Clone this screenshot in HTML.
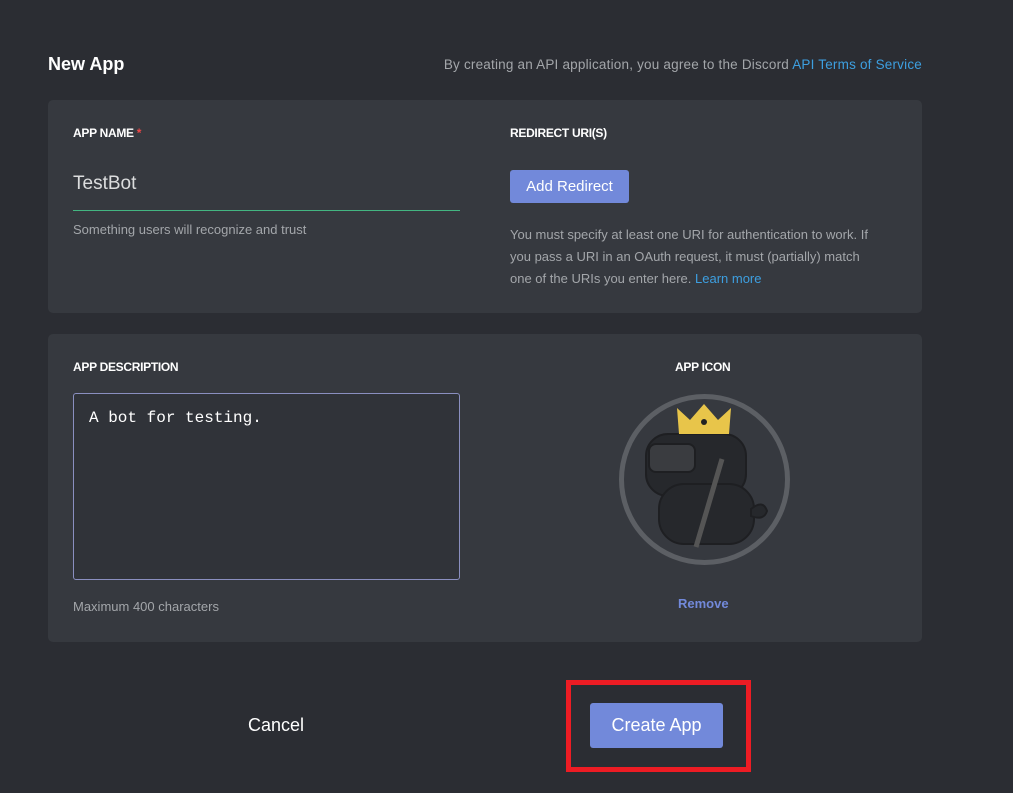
<!DOCTYPE html>
<html><head><style>
body{margin:0;width:1013px;height:793px;background:#2b2d33;font-family:"Liberation Sans",sans-serif;position:relative;overflow:hidden;color:#dcddde}
.a{position:absolute}
.panel{position:absolute;left:48px;width:874px;background:#36393f;border-radius:5px}
.lbl{font-size:12px;font-weight:bold;color:#fff;letter-spacing:-0.3px}
.sm{font-size:13px;color:#a3a6aa}
</style></head><body>
<div class="a" style="left:48px;top:54px;font-size:18px;font-weight:bold;color:#fff">New App</div>
<div class="a" style="right:91px;top:57px;font-size:13.5px;color:#a3a6aa;letter-spacing:0.2px">By creating an API application, you agree to the Discord <span style="color:#3d9fe0">API Terms of Service</span></div>

<div class="panel" style="top:100px;height:213px"></div>
<div class="a lbl" style="left:73px;top:126px">APP NAME <span style="color:#f04747">*</span></div>
<div class="a" style="left:73px;top:173px;font-size:19px;color:#dcddde">TestBot</div>
<div class="a" style="left:73px;top:210px;width:387px;height:1px;background:#43b581"></div>
<div class="a sm" style="left:73px;top:222px">Something users will recognize and trust</div>
<div class="a lbl" style="left:510px;top:126px">REDIRECT URI(S)</div>
<div class="a" style="left:510px;top:170px;width:119px;height:33px;background:#7289da;border-radius:3px;color:#fff;font-size:15px;line-height:33px;text-align:center">Add Redirect</div>
<div class="a sm" style="left:510px;top:224px;width:372px;line-height:22px">You must specify at least one URI for authentication to work. If you pass a URI in an OAuth request, it must (partially) match one of the URIs you enter here. <span style="color:#3d9fe0">Learn more</span></div>

<div class="panel" style="top:334px;height:308px"></div>
<div class="a lbl" style="left:73px;top:360px">APP DESCRIPTION</div>
<div class="a" style="left:73px;top:393px;width:385px;height:185px;border:1px solid #8a8fc0;border-radius:3px;background:#303339"></div>
<div class="a" style="left:89px;top:409px;font-family:'Liberation Mono',monospace;font-size:16px;color:#fff">A bot for testing.</div>
<div class="a sm" style="left:73px;top:599px">Maximum 400 characters</div>
<div class="a lbl" style="left:675px;top:360px">APP ICON</div>
<div class="a" style="left:619px;top:394px;width:161px;height:161px;border:5px solid #5c5f64;border-radius:50%;background:#36393f;overflow:hidden">
<svg width="161" height="161" viewBox="0 0 161 161">
<g fill="#26282c" stroke="#1e1f22" stroke-width="2">
<rect x="22" y="35" width="100" height="62" rx="22"/>
<rect x="35" y="85" width="95" height="60" rx="25"/>
<path d="M127 110 q12 -10 16 2 q-3 10 -16 5z"/>
</g>
<rect x="25" y="45" width="46" height="28" rx="7" fill="#3a3c40" stroke="#1e1f22" stroke-width="2"/>
<path d="M98 60 l-26 88" stroke="#555" stroke-width="5"/>
<path d="M55 35 l-2 -26 l13 12 l14 -16 l14 16 l13 -12 l-2 26z" fill="#e8c54a"/>
<circle cx="80" cy="23" r="3" fill="#222"/>
</svg></div>
<div class="a" style="left:678px;top:596px;font-size:13px;font-weight:bold;color:#7289da">Remove</div>

<div class="a" style="left:248px;top:715px;font-size:18px;color:#fff">Cancel</div>
<div class="a" style="left:566px;top:680px;width:175px;height:82px;border:5px solid #ed1c24"></div>
<div class="a" style="left:590px;top:703px;width:133px;height:45px;background:#7289da;border-radius:3px;color:#fff;font-size:18px;line-height:45px;text-align:center">Create App</div>
</body></html>
